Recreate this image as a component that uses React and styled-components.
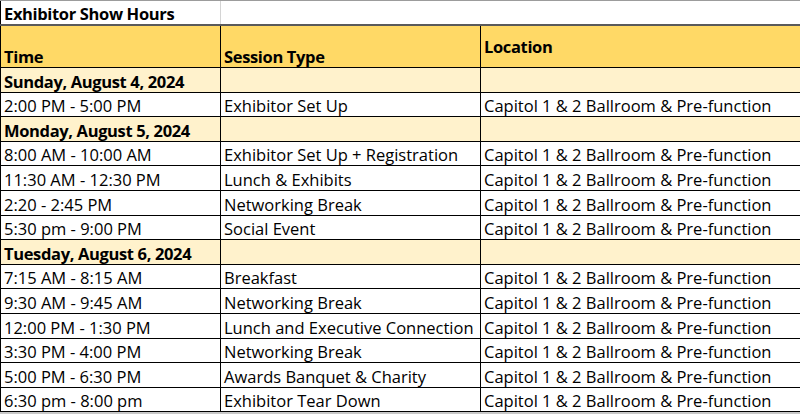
import styled, { createGlobalStyle } from "styled-components";

const GlobalStyle = createGlobalStyle`
  html, body {
    margin: 0;
    padding: 0;
    background: #ffffff;
  }
  body {
    font-family: "Open Sans", "Liberation Sans", sans-serif;
    color: #000000;
  }
`;

const schedule = [
  { date: "Sunday, August 4, 2024" },
  { time: "2:00 PM - 5:00 PM", session: "Exhibitor Set Up" },
  { date: "Monday, August 5, 2024" },
  { time: "8:00 AM - 10:00 AM", session: "Exhibitor Set Up + Registration" },
  { time: "11:30 AM - 12:30 PM", session: "Lunch & Exhibits" },
  { time: "2:20 - 2:45 PM", session: "Networking Break" },
  { time: "5:30 pm - 9:00 PM", session: "Social Event" },
  { date: "Tuesday, August 6, 2024" },
  { time: "7:15 AM - 8:15 AM", session: "Breakfast" },
  { time: "9:30 AM - 9:45 AM", session: "Networking Break" },
  { time: "12:00 PM - 1:30 PM", session: "Lunch and Executive Connection" },
  { time: "3:30 PM - 4:00 PM", session: "Networking Break" },
  { time: "5:00 PM - 6:30 PM", session: "Awards Banquet & Charity" },
  { time: "6:30 pm - 8:00 pm", session: "Exhibitor Tear Down" },
];

const LOCATION = "Capitol 1 & 2 Ballroom & Pre-function";

function App() {
  return (
    <>
      <GlobalStyle />
      <Sheet>
        <TitleRow>
          <Cell $bold>Exhibitor Show Hours</Cell>
          <Cell $grid />
        </TitleRow>

        <HeaderRow>
          <Cell $bold>Time</Cell>
          <Cell $bold>Session Type</Cell>
          <Cell $bold $center>Location</Cell>
        </HeaderRow>

        {schedule.map((row, i) =>
          row.date ? (
            <DateRow key={i}>
              <Cell $bold>{row.date}</Cell>
              <Cell />
              <Cell />
            </DateRow>
          ) : (
            <Row key={i}>
              <Cell>{row.time}</Cell>
              <Cell>{row.session}</Cell>
              <Cell>{LOCATION}</Cell>
            </Row>
          )
        )}
        <Tail />
      </Sheet>
    </>
  );
}

export default App;

const Sheet = styled.div`
  width: 800px;
  padding-top: 1px;
  display: flex;
  flex-direction: column;
  border-top: 1px solid #9c9c9c;
`;

const Row = styled.div`
  display: grid;
  grid-template-columns: 220px 260px 320px;
  height: 24.6px;
  box-sizing: border-box;
  border-bottom: 1px solid #000000;
  background: #ffffff;
`;

const TitleRow = styled(Row)`
  height: 24px;
  border-bottom: 1px solid #5a5a5a;
  margin-top: -1px;
`;

const HeaderRow = styled(Row)`
  height: 43px;
  background: #ffd966;
  border-top: 1px solid #5a5a5a;
`;

const DateRow = styled(Row)`
  background: #fff2cc;
`;

const Cell = styled.div`
  box-sizing: border-box;
  display: flex;
  align-items: ${(p) => (p.$center ? "center" : "flex-end")};
  padding: 0 3px 0 3px;
  border-left: 1px solid ${(p) => (p.$grid ? "#d4d4d4" : "#000000")};
  font-size: 16.5px;
  line-height: 21px;
  font-weight: ${(p) => (p.$bold ? 700 : 400)};
  letter-spacing: ${(p) => (p.$bold ? "-0.35px" : "0")};
  white-space: nowrap;
  overflow: hidden;
`;

const Tail = styled.div`
  height: 3px;
  background: #c8c8c8;
`;
